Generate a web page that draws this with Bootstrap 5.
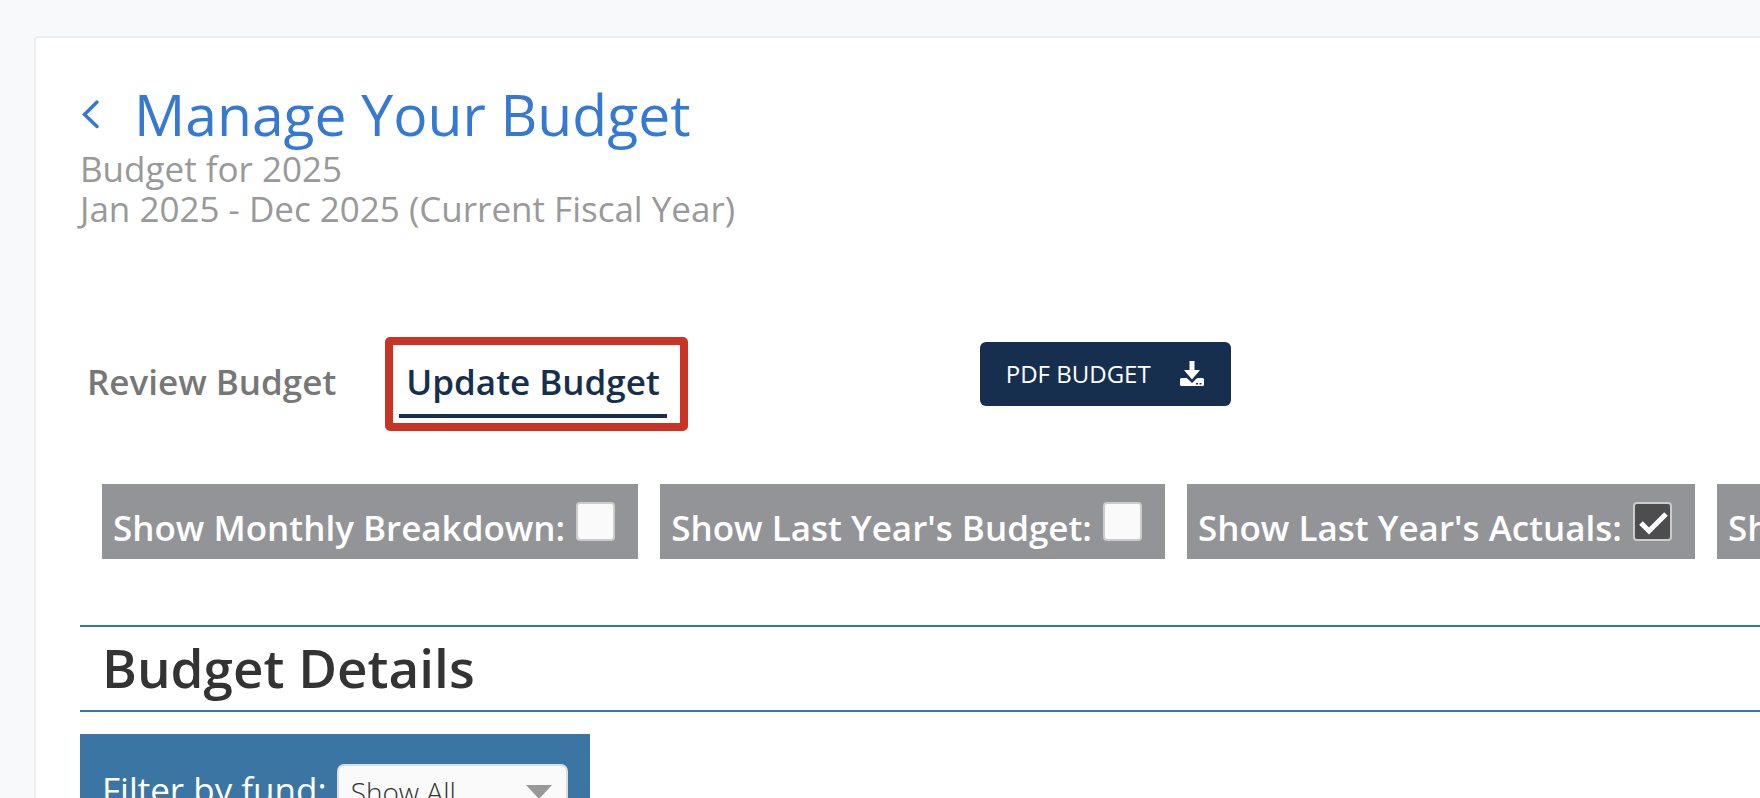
<!DOCTYPE html>
<html lang="en">
<head>
<meta charset="utf-8">
<meta name="viewport" content="width=device-width, initial-scale=1">
<title>Manage Your Budget</title>
<link href="https://cdn.jsdelivr.net/npm/bootstrap@5.3.0/dist/css/bootstrap.min.css" rel="stylesheet">
<style>
  body { font-family: "Open Sans", sans-serif; font-size: 35px; background: #f8f9fb; color: #333; }
  .sheet { margin: 36px 0 0 34px; padding: 41px 0 40px 44px; background: #fff; border: 2px solid #ebedef; border-right: 0; border-radius: 4px 0 0 0; }
  .page-title { font-size: 57px; line-height: 70px; color: #3579d2; gap: 34px; }
  .subtitle { line-height: 40px; color: #999; }
  .tab-bar { margin-top: 111px; gap: 56px; }
  .tab-link { position: relative; padding: 17px 7px 7px; line-height: 50px; border-bottom: 4px solid transparent; color: #777; font-weight: 600; white-space: nowrap; }
  .tab-link.active { color: #162f4e; border-color: #162f4e; }
  .highlight-frame { position: absolute; inset: -3px -21px -17px -14px; border: 8px solid #c93425; border-radius: 5px; pointer-events: none; }
  .btn-pdf { --bs-btn-color: #fff; --bs-btn-bg: #162f4e; --bs-btn-hover-color: #fff; --bs-btn-hover-bg: #20416a; --bs-btn-border-width: 0; --bs-btn-border-radius: 6px; --bs-btn-padding-x: 26px; --bs-btn-padding-y: 14px; --bs-btn-font-size: 24px; --bs-btn-line-height: 36px; gap: 28px; margin-left: 257px; margin-top: 2px; }
  .toggles { margin: 66px 0 66px 22px; gap: 22px; }
  .toggle-item { background: #939498; color: #fff; padding: 18px 23px 6px 11px; gap: 11px; line-height: 50px; font-weight: 600; white-space: nowrap; }
  .toggle-item .form-check-input { width: 39px; height: 39px; border: 2px solid #ccc; border-radius: 4px; background-color: #fafafa; }
  .toggle-item .form-check-input:checked { background-color: #4d4d4f; background-size: 35px 35px; background-image: url("data:image/svg+xml,%3Csvg xmlns='http://www.w3.org/2000/svg' viewBox='0 0 35 35'%3E%3Cpath d='M6 19l8 8 17-17' fill='none' stroke='white' stroke-width='5'/%3E%3C/svg%3E"); }
  .section-title { font-size: 53px; line-height: 81px; font-weight: 600; border: solid #3b75a4; border-width: 2px 0; padding: 0 0 2px 22px; }
  .filter-panel { margin-top: 22px; padding: 30px 22px; gap: 10px; background: #3b75a4; color: #fff; }
  .fund-select { width: 231px; height: 56px; padding: 0 40px 0 12px; font-size: 28px; font-weight: 300; color: #333; border: 2px solid #ddd; border-radius: 7px; background-color: #fafafa; background-position: right 14px center; background-size: 26px 14px; background-image: url("data:image/svg+xml,%3Csvg xmlns='http://www.w3.org/2000/svg' viewBox='0 0 26 14'%3E%3Cpath d='M0 0h26L13 14z' fill='%23999'/%3E%3C/svg%3E"); }
</style>
</head>
<body class="vh-100 overflow-hidden d-flow-root">
<main class="sheet">
  <header>
    <h1 class="page-title d-flex align-items-center m-0 fw-normal">
      <a href="#" class="d-flex" aria-label="Back"><svg width="20" height="30" viewBox="0 0 20 30" fill="none" stroke="#3579d2" stroke-width="3.500" stroke-linecap="round" stroke-linejoin="miter" aria-hidden="true"><path d="M17 3L4.500 15.500l12.500 12"/></svg></a>
      <span>Manage Your Budget</span>
    </h1>
    <p class="subtitle m-0">Budget for 2025<br>Jan 2025 - Dec 2025 (Current Fiscal Year)</p>
  </header>

  <nav class="tab-bar d-flex align-items-start" aria-label="Budget views">
    <a href="#" class="tab-link text-decoration-none">Review Budget</a>
    <a href="#" class="tab-link active text-decoration-none" aria-current="page">Update Budget<span class="highlight-frame"></span></a>
    <button type="button" class="btn btn-pdf d-flex align-items-center text-nowrap">PDF BUDGET
      <svg width="26" height="26" viewBox="0 0 26 26" aria-hidden="true">
        <path fill="#fff" d="M10.500 0h5v9h5.500L13 18.500 5 9h5.500zM2.500 17H8l5 5 5-5h5.500q1.500 0 1.500 1.500v5q0 1.500-1.500 1.500h-21Q1 25 1 23.500v-5Q1 17 2.500 17z"/>
        <path d="M7.500 16.200l5.500 4 5.500-4" fill="none" stroke="#162f4e" stroke-width="1"/>
        <path fill="#162f4e" d="M17 22h2v1.500h-2zM20.500 22h2v1.500h-2z"/>
      </svg>
    </button>
  </nav>

  <div class="toggles d-flex overflow-hidden">
    <label class="toggle-item d-flex align-items-baseline flex-shrink-0">Show Monthly Breakdown: <input type="checkbox" class="form-check-input m-0"></label>
    <label class="toggle-item d-flex align-items-baseline flex-shrink-0">Show Last Year's Budget: <input type="checkbox" class="form-check-input m-0"></label>
    <label class="toggle-item d-flex align-items-baseline flex-shrink-0">Show Last Year's Actuals: <input type="checkbox" class="form-check-input m-0" checked></label>
    <label class="toggle-item d-flex align-items-baseline flex-shrink-0">Show <input type="checkbox" class="form-check-input m-0"></label>
  </div>

  <section>
    <h2 class="section-title m-0">Budget Details</h2>
    <div class="filter-panel d-inline-flex align-items-baseline">
      <label for="fund" class="text-nowrap">Filter by fund:</label>
      <select id="fund" class="form-select fund-select"><option>Show All</option></select>
    </div>
  </section>
</main>
<script src="https://cdn.jsdelivr.net/npm/bootstrap@5.3.0/dist/js/bootstrap.bundle.min.js"></script>
</body>
</html>
